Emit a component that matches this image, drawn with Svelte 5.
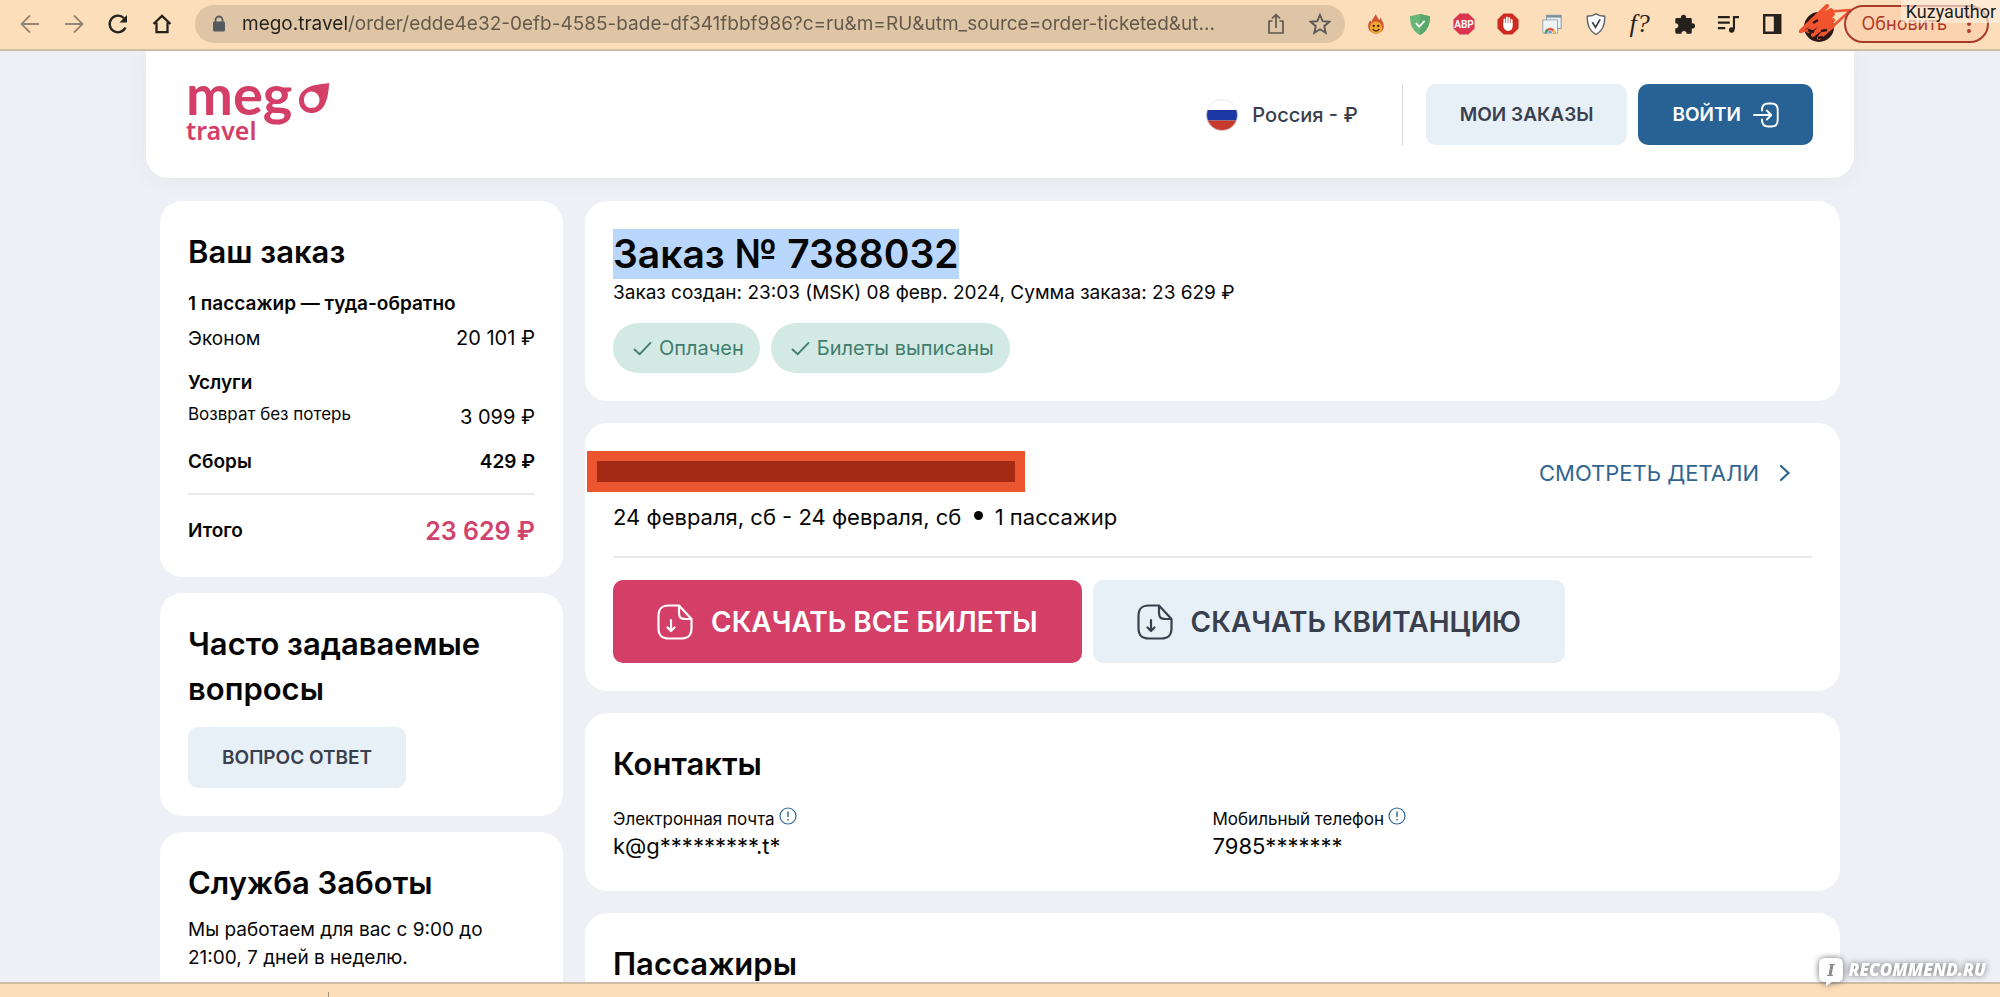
<script>
  const fares = [
    { title: '1 пассажир — туда-обратно', name: 'Эконом', price: '20 101 ₽', small: false },
    { title: 'Услуги', name: 'Возврат без потерь', price: '3 099 ₽', small: true }
  ];
  const statuses = ['Оплачен', 'Билеты выписаны'];
  const contacts = [
    { label: 'Электронная почта', value: 'k@g*********.t*' },
    { label: 'Мобильный телефон', value: '7985*******' }
  ];
  let address = $state(
    'mego.travel/order/edde4e32-0efb-4585-bade-df341fbbf986?c=ru&m=RU&utm_source=order-ticketed&ut...'
  );
</script>

{#snippet fileIcon()}
  <svg class="file-icon" viewBox="0 0 36 36" fill="none" stroke="currentColor" stroke-width="2.2" stroke-linecap="round" stroke-linejoin="round" aria-hidden="true">
    <path d="M22 1.500H12C4.500 1.500 1.500 4.500 1.500 12v12c0 7.500 3 10.500 10.500 10.500h12c7.500 0 10.500-3 10.500-10.500v-9L22 1.500v7c0 5 1.500 6.500 6.500 6.500h6" />
    <path d="M14 16v10M10.500 23.500l3.500 3.500 3.500-3.500" />
  </svg>
{/snippet}

<div class="window">
  <div class="toolbar">
    <nav class="nav" aria-label="Браузер">
      <button aria-label="Назад" class="dim">
        <svg viewBox="0 0 24 24" fill="none" stroke="currentColor" stroke-width="1.800"><path d="M21 12H3.500M12 3.500L3.500 12l8.500 8.500" /></svg>
      </button>
      <button aria-label="Вперёд" class="dim">
        <svg viewBox="0 0 24 24" fill="none" stroke="currentColor" stroke-width="1.800"><path d="M3 12h17.500M12 3.500l8.500 8.500-8.500 8.500" /></svg>
      </button>
      <button aria-label="Обновить страницу">
        <svg viewBox="0 0 24 24" fill="none" stroke="currentColor" stroke-width="2.300"><path d="M19.500 15.500A8.300 8.300 0 1 1 18 6.300" /><path d="M21 3v7.500h-7.500z" fill="currentColor" stroke="none" /></svg>
      </button>
      <button aria-label="Домой">
        <svg viewBox="0 0 24 24" fill="none" stroke="currentColor" stroke-width="2.300"><path d="M3.500 12L12 3.800l8.500 8.200M6.500 10.500v9.700h11v-9.700" /></svg>
      </button>
    </nav>

    <div class="address">
      <svg class="lock" viewBox="0 0 14 18" fill="#555a60"><path d="M3.500 7V5a3.500 3.500 0 0 1 7 0v2" fill="none" stroke="#555a60" stroke-width="1.800" /><rect x="1" y="6.500" width="12" height="10" rx="1.500" /></svg>
      <input type="text" aria-label="Адрес" bind:value={address} />
      <button aria-label="Поделиться">
        <svg viewBox="0 0 24 24" fill="none" stroke="currentColor" stroke-width="1.700" stroke-linejoin="round"><path d="M8.500 9H5v12h14V9h-3.500M12 16V3M8 6.500L12 2.700l4 3.800" /></svg>
      </button>
      <button aria-label="В закладки">
        <svg viewBox="0 0 24 24" fill="none" stroke="currentColor" stroke-width="1.900"><path d="M12 3l2.600 6.200 6.700.6-5.100 4.400 1.500 6.600L12 17.300l-5.700 3.500 1.500-6.600-5.100-4.400 6.700-.6z" /></svg>
      </button>
    </div>

    <div class="extensions">
      <button aria-label="Огонь">
        <svg viewBox="0 0 24 24"><path d="M12 1c.5 3 2 4.500 3.500 6.500.8-.8 1-1.700 1-2.700 2.300 3.500 4 6 4 9.700 0 4.500-4 8-8.500 8s-8.500-3.500-8.500-8c0-3 1-5 2.500-6.500.2 1 .5 1.700 1.200 2.300C7.500 6.500 10.500 4 12 1z" fill="#cf5330" /><circle cx="12" cy="16" r="6.700" fill="#f0a62f" /><circle cx="9.500" cy="14" r="1.300" fill="#3b2413" /><circle cx="14.500" cy="14" r="1.300" fill="#3b2413" /><path d="M8.500 17.500c1.800 3 5.200 3 7 0" fill="none" stroke="#3b2413" stroke-width="1.400" /></svg>
      </button>
      <button aria-label="Защита">
        <svg viewBox="0 0 24 24"><path d="M12 1l11 2.500C23 12 20 20 12 24 4 20 1 12 1 3.500z" fill="#68b578" /><path d="M12 1l11 2.500C23 12 20 20 12 24z" fill="#5aa76b" /><path d="M7.500 11l3.700 4L17 8.500" fill="none" stroke="#fff" stroke-width="2" /></svg>
      </button>
      <button aria-label="ABP">
        <svg viewBox="0 0 24 24"><path d="M7.300.5h9.400L23.500 7v10l-6.800 6.500H7.300L.5 17V7z" fill="#dc3550" /><text x="12" y="16" text-anchor="middle" font-family="Roboto, sans-serif" font-size="11" font-weight="700" fill="#fff">ABP</text></svg>
      </button>
      <button aria-label="Блокировщик">
        <svg viewBox="0 0 24 24"><path d="M7.300.5h9.400L23.500 7v10l-6.800 6.500H7.300L.5 17V7z" fill="#cf2a20" /><path d="M8 13V7M10.700 12V4.800M13.400 12V5.300M16 13V7.500" stroke="#fff" stroke-width="2" stroke-linecap="round" /><path d="M7 11h10v3.500c0 3.500-2 5-4.500 5-2.700 0-4-1.200-5.500-4z" fill="#fff" /></svg>
      </button>
      <button aria-label="Окна">
        <svg viewBox="0 0 24 24"><path d="M6 2.500h16V17H6z" fill="#e9f0f2" stroke="#78909c" /><path d="M6 2.500h16V5H6z" fill="#78909c" /><path d="M2 7.500h16V22H2z" fill="#eef3f5" stroke="#90a4ae" /><path d="M4 22a6 6 0 0 1 12 0z" fill="#e4573d" /><path d="M4 22a6 6 0 0 1 2-4.500L8 22z" fill="#3fa45b" /><path d="M16 22a6 6 0 0 0-2-4.500L12 22z" fill="#f3c033" /><path d="M7.200 22a2.800 2.800 0 0 1 5.600 0z" fill="#3f79d8" stroke="#fff" stroke-width=".8" /></svg>
      </button>
      <button aria-label="Проверка">
        <svg viewBox="0 0 24 24"><path d="M12 1c3 2 6 2.500 9.500 2.500C22 13 19 19.500 12 23.500 5 19.500 2 13 2.500 3.500 6 3.500 9 3 12 1z" fill="#fff" stroke="#5c6268" stroke-width="1.500" /><path d="M8 10l3.500 5.500L16.500 7" fill="none" stroke="#3e444b" stroke-width="1.900" /></svg>
      </button>
      <button aria-label="Шрифт" class="fq">f?</button>
      <button aria-label="Расширения">
        <svg viewBox="0 0 24 24" fill="#25221e"><path d="M4 5.500h4.700a2.900 2.900 0 1 1 5.600 0H19a1.500 1.500 0 0 1 1.500 1.500v4.200a2.900 2.900 0 1 1 0 5.600V21a1.500 1.500 0 0 1-1.500 1.500h-4.200a2.800 2.800 0 1 0-5.600 0H4A1.500 1.500 0 0 1 2.500 21v-4.300a2.800 2.800 0 1 0 0-5.500V7A1.500 1.500 0 0 1 4 5.500z" /></svg>
      </button>
      <button aria-label="Медиа">
        <svg viewBox="0 0 24 24" fill="none" stroke="#25221e" stroke-width="2.300"><path d="M1 4.500h13M1 10.500h13M1 16.500h8M18.500 18V4.500H24" /><circle cx="16" cy="18.500" r="3" fill="#25221e" stroke="none" /></svg>
      </button>
      <button aria-label="Боковая панель">
        <svg viewBox="0 0 24 24"><path d="M3.500 2.500h17.500v19H3.500z" fill="none" stroke="#25221e" stroke-width="2.600" /><path d="M14 2h7v20h-7z" fill="#25221e" /></svg>
      </button>
    </div>

    <button class="avatar" aria-label="Профиль">
      <svg viewBox="0 0 52 42" aria-hidden="true">
        <circle cx="20" cy="24" r="15" fill="#2b1715" />
        <g fill="none" stroke="#f0532d" stroke-linecap="round" stroke-linejoin="round">
          <path d="M2 28L28 3 8 23l24-16L9 28l25-17L14 32l20-15-14 18 14-12" stroke-width="4" />
          <path d="M24 9L52 7 33 24" stroke-width="2.500" />
          <path d="M1 29l12-3" stroke-width="2" />
        </g>
        <path d="M9 27l6 2M14 20l5-3M22 28l6-1M19 35l5-1" stroke="#2b1715" stroke-width="2.500" />
      </svg>
    </button>
    <button class="update">Обновить<span class="dots" aria-hidden="true"></span></button>
    <span class="author">Kuzyauthor</span>
  </div>

  <div class="page">
    <header>
      <a class="logo" href="#home" aria-label="mego travel">
        <span class="logo-top">meg<svg viewBox="0 0 32 32" aria-hidden="true"><path fill-rule="evenodd" d="M31 1C24 2 14 3 9 6 4 9 1 13 1 18.500 1 26 6.500 31 13 31c6 0 10.500-2.500 13.500-8S31 8 31 1zM13.500 9.500c4.500 0 8 4 8 8.500s-3.500 8-8 8S6 22.500 6 18s3-8.500 7.500-8.500z" fill="#d43f68" /></svg></span>
        <span class="logo-bottom">travel</span>
      </a>
      <div class="header-right">
        <button class="country">
          <svg viewBox="0 0 32 32" aria-hidden="true"><clipPath id="flag"><circle cx="16" cy="16" r="15.500" /></clipPath><g clip-path="url(#flag)"><path d="M0 0h32v11H0z" fill="#fff" /><path d="M0 11h32v10.500H0z" fill="#1b37a3" /><path d="M0 21.500h32V32H0z" fill="#c73b2d" /></g><circle cx="16" cy="16" r="15.500" fill="none" stroke="#d9d9de" stroke-width=".6" /></svg>
          Россия - ₽
        </button>
        <span class="divider"></span>
        <button class="btn light">МОИ ЗАКАЗЫ</button>
        <button class="btn blue">ВОЙТИ
          <svg viewBox="0 0 26 26" fill="none" stroke="currentColor" stroke-width="1.900" stroke-linecap="round" stroke-linejoin="round" aria-hidden="true"><path d="M9 8.500V8c0-4.500 2-6.500 6.500-6.500h3C23 1.500 24.700 3.500 24.700 8v10c0 4.500-1.700 6.500-6.200 6.500h-3C11 24.500 9 22.500 9 18v-.5M1 13h16.500M13.800 8.500l4.500 4.500-4.500 4.500" /></svg>
        </button>
      </div>
    </header>

    <div class="columns">
      <aside>
        <section class="card">
          <h2>Ваш заказ</h2>
          {#each fares as f}
            <h3>{f.title}</h3>
            <div class="line"><span class:small={f.small}>{f.name}</span><span class="price">{f.price}</span></div>
          {/each}
          <h3 class="fees"><span>Сборы</span><span>429 ₽</span></h3>
          <div class="total"><strong>Итого</strong><strong class="sum">23 629 ₽</strong></div>
        </section>
        <section class="card">
          <h2>Часто задаваемые вопросы</h2>
          <button class="btn light faq">ВОПРОС ОТВЕТ</button>
        </section>
        <section class="card">
          <h2>Служба Заботы</h2>
          <p class="care">Мы работаем для вас с 9:00 до 21:00, 7 дней в неделю.</p>
        </section>
      </aside>

      <main>
        <section class="card">
          <h1><span>Заказ № 7388032</span></h1>
          <p class="created">Заказ создан: 23:03 (MSK) 08 февр. 2024, Сумма заказа: 23 629 ₽</p>
          <div class="badges">
            {#each statuses as s}
              <span class="badge"><svg viewBox="0 0 20 16" fill="none" stroke="currentColor" stroke-width="2" stroke-linecap="round" aria-hidden="true"><path d="M1.500 9l5.500 5L18.500 2" /></svg>{s}</span>
            {/each}
          </div>
        </section>

        <section class="card">
          <div class="trip">
            <span class="redacted"></span>
            <a href="#details">СМОТРЕТЬ ДЕТАЛИ
              <svg viewBox="0 0 12 18" fill="none" stroke="currentColor" stroke-width="2.200" stroke-linecap="round" aria-hidden="true"><path d="M2 2l7.500 7L2 16" /></svg>
            </a>
          </div>
          <p class="dates">24 февраля, сб - 24 февраля, сб <i></i> 1 пассажир</p>
          <div class="downloads">
            <button class="big pink">{@render fileIcon()}СКАЧАТЬ ВСЕ БИЛЕТЫ</button>
            <button class="big light">{@render fileIcon()}СКАЧАТЬ КВИТАНЦИЮ</button>
          </div>
        </section>

        <section class="card">
          <h2>Контакты</h2>
          <dl>
            {#each contacts as c}
              <div>
                <dt>{c.label}<svg viewBox="0 0 18 18" fill="none" stroke="#2b6595" aria-hidden="true"><circle cx="9" cy="9" r="8" stroke-width="1.200" /><path d="M9 4.500v5.500M9 12v1.500" stroke-width="1.400" /></svg></dt>
                <dd>{c.value}</dd>
              </div>
            {/each}
          </dl>
        </section>

        <section class="card">
          <h2>Пассажиры</h2>
        </section>
      </main>
    </div>
  </div>

  <div class="shelf"><span></span></div>

  <div class="watermark">
    <svg viewBox="0 0 26 30" aria-hidden="true"><path d="M7 1h12q6 0 6 6v12q0 6-6 6h-5l-6 4v-4H7q-6 0-6-6V7q0-6 6-6z" fill="#fff" /><text x="13" y="19" text-anchor="middle" font-family="'DejaVu Serif', serif" font-style="italic" font-weight="700" font-size="16" fill="#8c8c90">I</text></svg>
    <span>RECOMMEND.RU</span>
  </div>
</div>

<style>
  :global(body) { background: #eff0f5; }
  .window {
    position: relative;
    display: flex;
    flex-direction: column;
    height: 100vh;
    overflow: hidden;
    font-family: Inter, sans-serif;
    font-size: 19px;
    line-height: 28px;
    color: #060606;
  }
  .window *, .window { box-sizing: border-box; }
  button {
    display: flex;
    align-items: center;
    border: 0;
    padding: 0;
    background: none;
    font: inherit;
    color: inherit;
    cursor: pointer;
  }
  h1, h2, h3, p, dl, dd { margin: 0; }
  a { text-decoration: none; }

  .toolbar {
    position: relative;
    z-index: 2;
    flex: none;
    display: flex;
    align-items: center;
    height: 51px;
    padding: 0 11px 2px 8px;
    background: #fcdfba;
    border-bottom: 2px solid #cdbda6;
    color: #25221e;
  }
  .nav { display: flex; margin-right: 11px; }
  .nav button { width: 44px; justify-content: center; }
  .nav svg { width: 24px; height: 24px; }
  .nav .dim { color: #958573; }
  .address {
    flex: 1;
    display: flex;
    align-items: center;
    height: 38px;
    padding: 0 13px 0 17px;
    border-radius: 19px;
    background: #dec5a5;
  }
  .lock { width: 14px; height: 18px; }
  .address input {
    flex: 1;
    min-width: 0;
    margin-left: 16px;
    border: 0;
    padding: 0;
    font: inherit;
    color: transparent;
    background: linear-gradient(90deg, #25221e 105px, #64574a 105px);
    background-clip: text;
  }
  .address button { margin-left: 20px; color: #5d5953; }
  .address svg:not(.lock) { width: 24px; height: 24px; }
  .extensions { display: flex; margin-left: 9px; }
  .extensions button { width: 44px; justify-content: center; }
  .extensions svg { width: 22px; height: 22px; }
  .extensions .fq { font: italic 26px/28px "Liberation Serif", serif; }
  .avatar svg { width: 52px; height: 42px; }
  .avatar { margin: 0 -7px 0 5px; }
  .update {
    height: 38px;
    padding: 0 16px;
    border: 2px solid #a63a2c;
    border-radius: 19px;
    background: #fbd3ae;
    color: #b23a2c;
    font-size: 18px;
  }
  .dots {
    width: 4px;
    height: 4px;
    margin-left: 20px;
    border-radius: 50%;
    background: #b23a2c;
    box-shadow: 0 -7px #b23a2c, 0 7px #b23a2c;
  }
  .author {
    position: absolute;
    top: 0;
    right: 0;
    padding: 1px 4px 0 5px;
    background: rgba(255, 240, 225, 0.65);
    font: 18px/22px Roboto, sans-serif;
    color: #1c1c1c;
  }

  .page { flex: 1; min-height: 0; overflow: hidden; padding: 0 20px; }
  header {
    display: flex;
    justify-content: space-between;
    max-width: 1708px;
    height: 127px;
    margin: 0 auto;
    padding: 33px 41px 0 40px;
    border-radius: 0 0 22px 22px;
    background: #fff;
    box-shadow: 0 0 24px rgba(60, 65, 90, 0.06);
  }
  .logo { display: flex; flex-direction: column; color: #d43f68; }
  .logo-top { display: flex; height: 36px; margin-top: -12px; font: 700 56px/44px Lato, sans-serif; }
  .logo-top svg { width: 32px; height: 32px; margin: 10px 0 0 6px; }
  .logo-bottom { margin-top: 8px; font: 600 25px/28px "Noto Sans", sans-serif; }
  .header-right { display: flex; align-items: flex-start; }
  .country { height: 61px; font-size: 20px; font-weight: 500; color: #3a3f4e; }
  .country svg { width: 32px; height: 32px; margin-right: 14px; }
  .divider { width: 1px; height: 61px; margin: 0 23px 0 44px; background: #d5d8de; }
  .btn {
    height: 61px;
    padding: 0 34px;
    border-radius: 10px;
    font-weight: 600;
  }
  .light { background: #e6f0f6; color: #3a3f4e; }
  .blue { margin-left: 11px; background: #286294; color: #fff; }
  .blue svg { width: 26px; height: 26px; margin-left: 12px; }

  .columns {
    display: grid;
    grid-template-columns: 403px minmax(0, 1fr);
    gap: 22px;
    align-items: start;
    max-width: 1680px;
    margin: 23px auto 0;
  }
  aside, main { display: flex; flex-direction: column; gap: 22px; }
  aside { gap: 16px; }
  .card { padding: 28px; border-radius: 22px; background: #fff; }
  h2 { font-size: 31px; line-height: 45px; font-weight: 600; }
  h3 { margin-top: 16px; font-size: 19px; line-height: 28px; font-weight: 600; }
  .line { display: flex; justify-content: space-between; margin-top: 6px; line-height: 29px; }
  .price { font-size: 20px; }
  .small { font-size: 17px; line-height: 22px; }
  .fees { display: flex; justify-content: space-between; }
  .total {
    display: flex;
    justify-content: space-between;
    align-items: center;
    margin-top: 17px;
    padding-top: 18px;
    border-top: 2px solid #e8eaed;
    line-height: 36px;
  }
  strong { font-weight: 600; }
  .sum { font-size: 25px; color: #d0436d; }
  .faq { margin-top: 16px; }
  .care { margin-top: 11px; }

  h1 { font-size: 39px; line-height: 50px; font-weight: 600; }
  h1 span { display: inline-block; vertical-align: top; background: #b9d6fc; }
  .badges { display: flex; gap: 11px; margin-top: 16px; }
  .badge {
    display: flex;
    align-items: center;
    height: 50px;
    padding: 0 16px 0 20px;
    border-radius: 25px;
    background: #d3eae4;
    color: #417d6d;
    font-size: 20px;
  }
  .badge svg { width: 19px; height: 15px; margin-right: 7px; }

  .trip { position: relative; display: flex; justify-content: flex-end; height: 44px; }
  .redacted {
    position: absolute;
    left: -26px;
    top: 0;
    width: 438px;
    height: 41px;
    border: 10px solid #eb5530;
    background: #a52a16;
  }
  .trip a { display: flex; align-items: center; margin-right: 21px; font-size: 22px; color: #31658f; }
  .trip svg { width: 12px; height: 18px; margin-left: 20px; }
  .dates { margin-top: 6px; font-size: 22px; line-height: 32px; }
  .dates i {
    display: inline-block;
    width: 9px;
    height: 9px;
    margin: 0 6px;
    border-radius: 50%;
    background: #060606;
    vertical-align: 5px;
  }
  .downloads {
    display: flex;
    gap: 11px;
    margin-top: 23px;
    padding-top: 22px;
    border-top: 2px solid #e8eaed;
  }
  .big {
    height: 83px;
    padding: 0 44px;
    border-radius: 10px;
    font-size: 28px;
    font-weight: 600;
  }
  .pink { background: #d43f68; color: #fff; }
  .file-icon { width: 36px; height: 36px; margin-right: 18px; }

  dl { display: grid; grid-template-columns: 1fr 1fr; margin-top: 21px; }
  dt { display: flex; font-size: 17px; line-height: 25px; }
  dt svg { width: 18px; height: 18px; margin-left: 4px; }
  dd { margin-bottom: 2px; font-size: 22px; line-height: 29px; }

  .shelf {
    flex: none;
    position: relative;
    z-index: 2;
    display: flex;
    align-items: flex-end;
    height: 15px;
    padding-left: 328px;
    background: #fcdfba;
    border-top: 2px solid #cdbda6;
  }
  .shelf span { width: 1px; height: 5px; background: #a2907a; }

  .watermark {
    position: absolute;
    z-index: 3;
    right: 14px;
    bottom: 10px;
    display: flex;
    align-items: flex-start;
    gap: 4px;
    filter: drop-shadow(0 0 3px rgba(70, 70, 80, 0.8));
    font: italic 800 17px/26px "Open Sans", sans-serif;
    color: #fff;
  }
  .watermark svg { width: 26px; height: 30px; }
</style>
